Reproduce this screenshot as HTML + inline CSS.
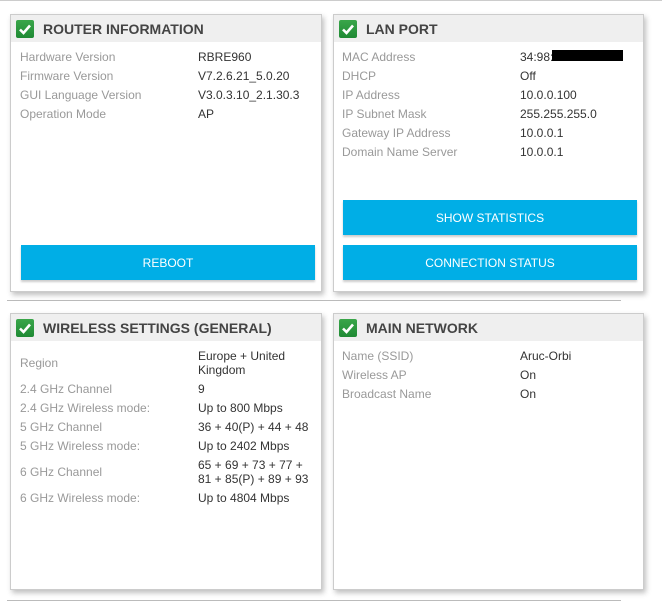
<!DOCTYPE html>
<html><head><style>
body{margin:0;width:662px;height:607px;background:#fff;font-family:"Liberation Sans",sans-serif;position:relative;overflow:hidden}
.topline{position:absolute;left:0;top:0;width:662px;height:1px;background:#ccc}
.hr{position:absolute;left:7px;width:614px;height:1px;background:#bbb}
.panel{position:absolute;background:#fff;border:1px solid #ccc;box-sizing:border-box;box-shadow:2px 3px 5px rgba(0,0,0,.25)}
.hd{height:27px;background:#efefef;position:relative}
.hd .ck{position:absolute;left:5px;top:5px;width:18px;height:18px;background:linear-gradient(#3aa64a,#1f8a34);border-radius:2px}
.hd .ck svg{position:absolute;left:0;top:0}
.hd span{position:absolute;left:32px;top:6px;font-size:14px;font-weight:bold;color:#444}
.row{position:absolute;font-size:12px;line-height:14px;margin-top:1px}
.l{color:#999}.v{color:#333}
.btn{position:absolute;background:#00aee6;color:#fff;font-size:12px;text-align:center;line-height:36px;height:35px;width:294px;box-shadow:0 2px 2px rgba(0,0,0,.2)}
</style></head><body>
<div class="topline"></div>
<div class="hr" style="top:300px"></div>
<div class="hr" style="top:600px"></div>

<div class="panel" style="left:10px;top:14px;width:312px;height:278px">
<div class="hd"><div class="ck"><svg width="18" height="18"><path d="M4 9.5l3.5 3.5L14 5.5" stroke="#fff" stroke-width="2.6" fill="none"/></svg></div><span>ROUTER INFORMATION</span></div>
</div>
<div class="row l" style="left:20px;top:49px">Hardware Version</div><div class="row v" style="left:198px;top:49px">RBRE960</div>
<div class="row l" style="left:20px;top:68px">Firmware Version</div><div class="row v" style="left:198px;top:68px">V7.2.6.21_5.0.20</div>
<div class="row l" style="left:20px;top:87px">GUI Language Version</div><div class="row v" style="left:198px;top:87px">V3.0.3.10_2.1.30.3</div>
<div class="row l" style="left:20px;top:106px">Operation Mode</div><div class="row v" style="left:198px;top:106px">AP</div>
<div class="btn" style="left:21px;top:245px">REBOOT</div>

<div class="panel" style="left:333px;top:14px;width:311px;height:278px">
<div class="hd"><div class="ck"><svg width="18" height="18"><path d="M4 9.5l3.5 3.5L14 5.5" stroke="#fff" stroke-width="2.6" fill="none"/></svg></div><span>LAN PORT</span></div>
</div>
<div class="row l" style="left:342px;top:49px">MAC Address</div><div class="row v" style="left:520px;top:49px">34:98:</div>
<div style="position:absolute;left:552px;top:50px;width:71px;height:11px;background:#000"></div>
<div class="row l" style="left:342px;top:68px">DHCP</div><div class="row v" style="left:520px;top:68px">Off</div>
<div class="row l" style="left:342px;top:87px">IP Address</div><div class="row v" style="left:520px;top:87px">10.0.0.100</div>
<div class="row l" style="left:342px;top:106px">IP Subnet Mask</div><div class="row v" style="left:520px;top:106px">255.255.255.0</div>
<div class="row l" style="left:342px;top:125px">Gateway IP Address</div><div class="row v" style="left:520px;top:125px">10.0.0.1</div>
<div class="row l" style="left:342px;top:144px">Domain Name Server</div><div class="row v" style="left:520px;top:144px">10.0.0.1</div>
<div class="btn" style="left:343px;top:200px">SHOW STATISTICS</div>
<div class="btn" style="left:343px;top:245px">CONNECTION STATUS</div>

<div class="panel" style="left:10px;top:313px;width:312px;height:277px">
<div class="hd"><div class="ck"><svg width="18" height="18"><path d="M4 9.5l3.5 3.5L14 5.5" stroke="#fff" stroke-width="2.6" fill="none"/></svg></div><span>WIRELESS SETTINGS (GENERAL)</span></div>
</div>
<div class="row l" style="left:20px;top:355px">Region</div><div class="row v" style="left:198px;top:348px;width:100px">Europe + United Kingdom</div>
<div class="row l" style="left:20px;top:381px">2.4 GHz Channel</div><div class="row v" style="left:198px;top:381px">9</div>
<div class="row l" style="left:20px;top:400px">2.4 GHz Wireless mode:</div><div class="row v" style="left:198px;top:400px">Up to 800 Mbps</div>
<div class="row l" style="left:20px;top:419px">5 GHz Channel</div><div class="row v" style="left:198px;top:419px">36 + 40(P) + 44 + 48</div>
<div class="row l" style="left:20px;top:438px">5 GHz Wireless mode:</div><div class="row v" style="left:198px;top:438px">Up to 2402 Mbps</div>
<div class="row l" style="left:20px;top:464px">6 GHz Channel</div><div class="row v" style="left:198px;top:457px;width:120px">65 + 69 + 73 + 77 +<br>81 + 85(P) + 89 + 93</div>
<div class="row l" style="left:20px;top:490px">6 GHz Wireless mode:</div><div class="row v" style="left:198px;top:490px">Up to 4804 Mbps</div>

<div class="panel" style="left:333px;top:313px;width:311px;height:277px">
<div class="hd"><div class="ck"><svg width="18" height="18"><path d="M4 9.5l3.5 3.5L14 5.5" stroke="#fff" stroke-width="2.6" fill="none"/></svg></div><span>MAIN NETWORK</span></div>
</div>
<div class="row l" style="left:342px;top:348px">Name (SSID)</div><div class="row v" style="left:520px;top:348px">Aruc-Orbi</div>
<div class="row l" style="left:342px;top:367px">Wireless AP</div><div class="row v" style="left:520px;top:367px">On</div>
<div class="row l" style="left:342px;top:386px">Broadcast Name</div><div class="row v" style="left:520px;top:386px">On</div>
</body></html>
